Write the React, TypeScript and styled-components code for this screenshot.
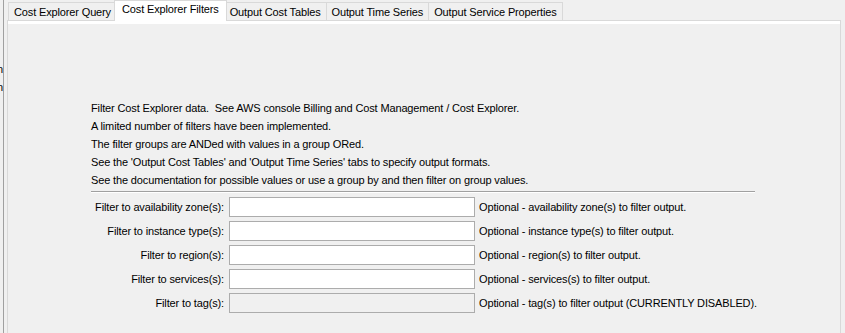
import React from 'react'
import styled, { createGlobalStyle } from 'styled-components'

const GlobalStyle = createGlobalStyle`
  html, body {
    margin: 0;
    padding: 0;
    background: #f0f0f0;
  }
  body {
    font-family: 'Liberation Sans', Arial, sans-serif;
    font-size: 11px;
    letter-spacing: -0.14px;
    color: #000;
  }
`

const Window = styled.div`
  display: flex;
  height: 333px;
  width: 845px;
  overflow: hidden;
  background: #f0f0f0;
`

const LeftStub = styled.div`
  width: 3px;
  overflow: hidden;
  display: flex;
  flex-direction: column;
  align-items: flex-end;
  padding-top: 60px;
  line-height: 18px;
  white-space: nowrap;
`

const Divider = styled.div`
  width: 1px;
  background: #a0a0a0;
`

const TabPane = styled.div`
  display: flex;
  flex-direction: column;
  margin-left: 3px;
  width: 834px;
`

const TabStrip = styled.div`
  display: flex;
  align-items: flex-end;
  height: 20px;
  padding-left: 1px;
`

const Tab = styled.div<{ $selected?: boolean }>`
  box-sizing: border-box;
  border: 1px solid #d9d9d9;
  border-bottom: none;
  white-space: nowrap;
  line-height: 17px;
  margin-left: -1px;
  padding: 1px 5px 0;
  height: 18px;
  background: #f0f0f0;

  &:first-child {
    margin-left: 0;
  }

  ${({ $selected }) =>
    $selected &&
    `
    position: relative;
    z-index: 1;
    height: 21px;
    margin: 0 -2px -1px -3px;
    padding: 0 7px;
    background: #fff;
  `}
`

const Panel = styled.div`
  flex: 1;
  border: 1px solid #d9d9d9;
  border-bottom: none;
  box-shadow: inset 0 3px 0 #fff;
  padding: 78px 0 0 83px;
`

const Intro = styled.div`
  line-height: 18px;
  white-space: pre;
`

const Separator = styled.div`
  width: 664px;
  height: 1px;
  margin-top: 2px;
  background: #a0a0a0;
  border-bottom: 1px solid #fff;
`

const FilterGrid = styled.div`
  display: grid;
  grid-template-columns: 138px 246px auto;
  grid-auto-rows: 20px;
  row-gap: 4px;
  margin-top: 4px;
  align-items: center;
`

const Label = styled.div`
  text-align: right;
  padding-right: 5px;
  white-space: nowrap;
`

const Field = styled.input<{ disabled?: boolean }>`
  box-sizing: border-box;
  width: 246px;
  height: 20px;
  margin: 0;
  border: 1px solid #acacac;
  background: ${({ disabled }) => (disabled ? '#f0f0f0' : '#fff')};
  font: inherit;
  padding: 0 3px;
  outline: none;
`

const Hint = styled.div`
  padding-left: 4px;
  white-space: nowrap;
`

const tabs = [
  'Cost Explorer Query',
  'Cost Explorer Filters',
  'Output Cost Tables',
  'Output Time Series',
  'Output Service Properties',
]

const filters = [
  { label: 'Filter to availability zone(s):', hint: 'Optional - availability zone(s) to filter output.' },
  { label: 'Filter to instance type(s):', hint: 'Optional - instance type(s) to filter output.' },
  { label: 'Filter to region(s):', hint: 'Optional - region(s) to filter output.' },
  { label: 'Filter to services(s):', hint: 'Optional - services(s) to filter output.' },
  { label: 'Filter to tag(s):', hint: 'Optional - tag(s) to filter output (CURRENTLY DISABLED).', disabled: true },
]

const App: React.FC = () => {
  return (
    <>
      <GlobalStyle />
      <Window>
        <LeftStub>
          <span>Region</span>
          <span>Region</span>
        </LeftStub>
        <Divider />
        <TabPane>
          <TabStrip>
            {tabs.map((t, i) => (
              <Tab key={t} $selected={i === 1}>
                {t}
              </Tab>
            ))}
          </TabStrip>
          <Panel>
            <Intro>
              {'Filter Cost Explorer data.  See AWS console Billing and Cost Management / Cost Explorer.'}
              <br />
              A limited number of filters have been implemented.
              <br />
              The filter groups are ANDed with values in a group ORed.
              <br />
              {"See the 'Output Cost Tables' and 'Output Time Series' tabs to specify output formats."}
              <br />
              See the documentation for possible values or use a group by and then filter on group values.
            </Intro>
            <Separator />
            <FilterGrid>
              {filters.map((f) => (
                <React.Fragment key={f.label}>
                  <Label>{f.label}</Label>
                  <Field disabled={f.disabled} />
                  <Hint>{f.hint}</Hint>
                </React.Fragment>
              ))}
            </FilterGrid>
          </Panel>
        </TabPane>
      </Window>
    </>
  )
}

export default App
